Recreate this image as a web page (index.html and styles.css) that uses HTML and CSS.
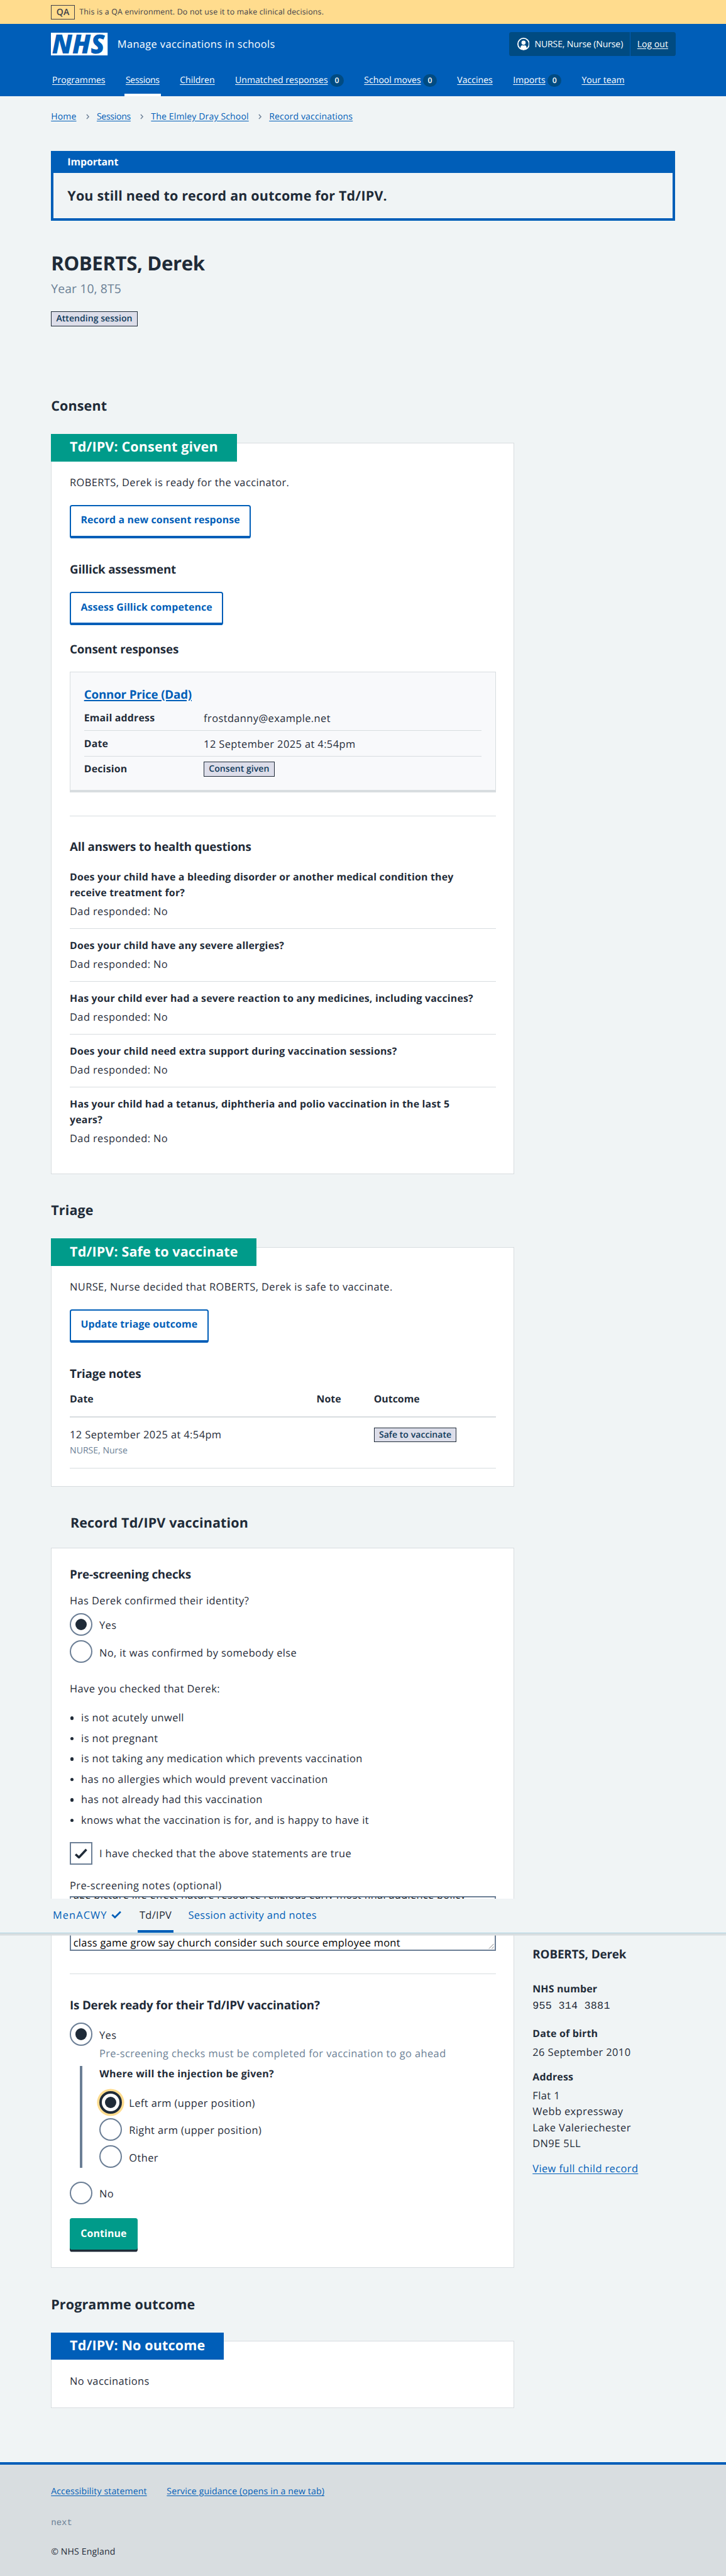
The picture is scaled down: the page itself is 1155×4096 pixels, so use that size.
FILE: index.html
```html
<!DOCTYPE html>
<html lang="en">
<head>
<meta charset="utf-8">
<title>ROBERTS, Derek – Manage vaccinations in schools</title>
<link rel="stylesheet" href="styles.css">
</head>
<body>
<div class="page">
  <div class="environment">
    <span class="environment-tag">QA</span>
    <span>This is a QA environment. Do not use it to make clinical decisions.</span>
  </div>

  <header class="header">
    <div class="header-top">
      <svg class="logo" viewBox="0 0 100 40" role="img" aria-label="NHS">
        <rect width="100" height="40" fill="#fff"/>
        <text class="logo-text" x="2" y="36.4" textLength="93" lengthAdjust="spacingAndGlyphs">NHS</text>
      </svg>
      <span class="service-name">Manage vaccinations in schools</span>
      <div class="account">
        <span class="account-user">
          <svg class="account-icon" viewBox="0 0 22 22" aria-hidden="true">
            <circle cx="11" cy="11" r="10" fill="none" stroke="#fff" stroke-width="2"/>
            <circle cx="11" cy="8.7" r="3.7" fill="#fff"/>
            <path d="M5.600 20v-2.200c0-3 1.800-4.400 3.400-4.400.7.4 1.300.5 2 .5s1.300-.1 2-.5c1.600 0 3.400 1.400 3.400 4.400V20l-5.400 1.500z" fill="#fff"/>
          </svg>
          <span>NURSE, Nurse (Nurse)</span>
        </span>
        <a class="account-link" href="#"><span>Log out</span></a>
      </div>
    </div>
    <nav class="nav">
      <a class="nav-item" href="#"><span>Programmes</span></a>
      <a class="nav-item nav-item-current" href="#"><span>Sessions</span></a>
      <a class="nav-item" href="#"><span>Children</span></a>
      <a class="nav-item" href="#"><span>Unmatched responses</span><b class="count">0</b></a>
      <a class="nav-item" href="#"><span>School moves</span><b class="count">0</b></a>
      <a class="nav-item" href="#"><span>Vaccines</span></a>
      <a class="nav-item" href="#"><span>Imports</span><b class="count">0</b></a>
      <a class="nav-item" href="#"><span>Your team</span></a>
    </nav>
  </header>

  <nav class="breadcrumb">
    <a href="#">Home</a>
    <svg class="chevron" viewBox="0 0 6 10"><path d="M1 1l3.600 4L1 9"/></svg>
    <a class="breadcrumb-sessions" href="#">Sessions</a>
    <svg class="chevron" viewBox="0 0 6 10"><path d="M1 1l3.600 4L1 9"/></svg>
    <a href="#">The Elmley Dray School</a>
    <svg class="chevron" viewBox="0 0 6 10"><path d="M1 1l3.600 4L1 9"/></svg>
    <a href="#">Record vaccinations</a>
  </nav>

  <section class="notice">
    <h2 class="notice-title">Important</h2>
    <p class="notice-text">You still need to record an outcome for Td/IPV.</p>
  </section>

  <div class="patient">
    <h1 class="patient-name">ROBERTS, Derek</h1>
    <p class="patient-year">Year 10, 8T5</p>
    <span class="tag">Attending session</span>
  </div>

  <div class="columns">
    <main class="main">
      <h2 class="heading">Consent</h2>
      <section class="card">
        <h3 class="card-heading">Td/IPV: Consent given</h3>
        <p class="text">ROBERTS, Derek is ready for the vaccinator.</p>
        <a class="button button-secondary" href="#">Record a new consent response</a>
        <h4 class="subheading">Gillick assessment</h4>
        <a class="button button-secondary" href="#">Assess Gillick competence</a>
        <h4 class="subheading subheading-responses">Consent responses</h4>
        <div class="response">
          <h5 class="response-name"><a href="#">Connor Price (Dad)</a></h5>
          <dl class="summary">
            <div class="summary-row"><dt>Email address</dt><dd>frostdanny@example.net</dd></div>
            <div class="summary-row"><dt>Date</dt><dd>12 September 2025 at 4:54pm</dd></div>
            <div class="summary-row"><dt>Decision</dt><dd><span class="tag">Consent given</span></dd></div>
          </dl>
        </div>
        <hr class="rule">
        <h4 class="subheading subheading-rule">All answers to health questions</h4>
        <dl class="answers">
          <div class="answer"><dt>Does your child have a bleeding disorder or another medical condition they receive treatment for?</dt><dd>Dad responded: No</dd></div>
          <div class="answer"><dt>Does your child have any severe allergies?</dt><dd>Dad responded: No</dd></div>
          <div class="answer"><dt>Has your child ever had a severe reaction to any medicines, including vaccines?</dt><dd>Dad responded: No</dd></div>
          <div class="answer"><dt>Does your child need extra support during vaccination sessions?</dt><dd>Dad responded: No</dd></div>
          <div class="answer"><dt>Has your child had a tetanus, diphtheria and polio vaccination in the last 5 years?</dt><dd>Dad responded: No</dd></div>
        </dl>
      </section>

      <h2 class="heading heading-next">Triage</h2>
      <section class="card card-triage">
        <h3 class="card-heading">Td/IPV: Safe to vaccinate</h3>
        <p class="text">NURSE, Nurse decided that ROBERTS, Derek is safe to vaccinate.</p>
        <a class="button button-secondary" href="#">Update triage outcome</a>
        <h4 class="subheading">Triage notes</h4>
        <table class="notes">
          <thead><tr><th class="notes-date">Date</th><th class="notes-note">Note</th><th>Outcome</th></tr></thead>
          <tbody><tr>
            <td>12 September 2025 at 4:54pm<small class="notes-author">NURSE, Nurse</small></td>
            <td></td>
            <td><span class="tag">Safe to vaccinate</span></td>
          </tr></tbody>
        </table>
      </section>

      <h2 class="heading heading-record">Record Td/IPV vaccination</h2>
      <form class="card card-form">
        <h4 class="subheading subheading-form">Pre-screening checks</h4>
        <p class="question">Has Derek confirmed their identity?</p>
        <div class="choices">
          <label class="choice"><i class="radio radio-on"></i><span class="choice-text">Yes</span></label>
          <label class="choice"><i class="radio"></i><span class="choice-text">No, it was confirmed by somebody else</span></label>
        </div>
        <p class="statement">Have you checked that Derek:</p>
        <ul class="bullets">
          <li>is not acutely unwell</li>
          <li>is not pregnant</li>
          <li>is not taking any medication which prevents vaccination</li>
          <li>has no allergies which would prevent vaccination</li>
          <li>has not already had this vaccination</li>
          <li>knows what the vaccination is for, and is happy to have it</li>
        </ul>
        <label class="choice choice-check">
          <span class="checkbox"><svg class="tick" viewBox="0 0 24 18"><path d="M2.400 10.500l6 5.500L21.600 2"/></svg></span>
          <span class="choice-text">I have checked that the above statements are true</span>
        </label>
        <p class="notes-label">Pre-screening notes (optional)</p>
        <div class="textarea">
          <p class="textarea-first">age picture life effect nature resource religious early most final audience policy</p>
          <p class="textarea-last">class game grow say church consider such source employee mont</p>
          <svg class="resizer" viewBox="0 0 10 10"><path d="M1 9.500L9.500 1M6 9.500L9.500 6"/></svg>
        </div>
        <hr class="rule">
        <h4 class="subheading subheading-rule">Is Derek ready for their Td/IPV vaccination?</h4>
        <div class="choices choices-ready">
          <div>
            <label class="choice"><i class="radio radio-on"></i><span class="choice-text">Yes</span></label>
            <p class="hint">Pre-screening checks must be completed for vaccination to go ahead</p>
            <div class="conditional">
              <p class="conditional-title">Where will the injection be given?</p>
              <div class="choices">
                <label class="choice"><i class="radio radio-on radio-focus"></i><span class="choice-text">Left arm (upper position)</span></label>
                <label class="choice"><i class="radio"></i><span class="choice-text">Right arm (upper position)</span></label>
                <label class="choice"><i class="radio"></i><span class="choice-text">Other</span></label>
              </div>
            </div>
          </div>
          <label class="choice"><i class="radio"></i><span class="choice-text">No</span></label>
        </div>
        <button class="button button-primary" type="button">Continue</button>
      </form>

      <h2 class="heading heading-next">Programme outcome</h2>
      <section class="card card-outcome">
        <h3 class="card-heading card-heading-blue">Td/IPV: No outcome</h3>
        <p class="text">No vaccinations</p>
      </section>
    </main>

    <aside class="sidebar">
      <h3 class="sidebar-name">ROBERTS, Derek</h3>
      <dl class="details">
        <dt>NHS number</dt>
        <dd class="nhs-number">955 314 3881</dd>
        <dt>Date of birth</dt>
        <dd>26 September 2010</dd>
        <dt>Address</dt>
        <dd>Flat 1<br>Webb expressway<br>Lake Valeriechester<br>DN9E 5LL</dd>
      </dl>
      <a href="#">View full child record</a>
    </aside>
  </div>

  <footer class="footer">
    <div class="footer-links">
      <a href="#">Accessibility statement</a>
      <a href="#">Service guidance (opens in a new tab)</a>
    </div>
    <p class="footer-version">next</p>
    <p class="footer-copyright">© NHS England</p>
  </footer>

  <nav class="tabs">
    <a class="tab tab-done" href="#"><span>MenACWY</span><svg class="tab-tick" viewBox="0 0 18 14"><path d="M1.500 7.200l5 4.800L16.500 2"/></svg></a>
    <a class="tab tab-current" href="#">Td/IPV</a>
    <a class="tab" href="#">Session activity and notes</a>
  </nav>
</div>
</body>
</html>
```
FILE: styles.css
```css
* { box-sizing: border-box; margin: 0; padding: 0; }

body {
  background: #f0f4f5;
  color: #1f2b38;
  font-family: "Open Sans", "Noto Sans", sans-serif;
  font-size: 18.2px;
  line-height: 28px;
  letter-spacing: 0.45px;
  text-rendering: geometricPrecision;
}

.page { position: relative; width: 1280px; zoom: 0.90234; }

a { color: #005eb8; text-decoration: underline; text-underline-offset: 2px; }
ul { list-style: none; }
i { font-style: normal; }

/* Environment banner */
.environment {
  display: flex; align-items: center; gap: 8px;
  height: 42px; padding: 1px 0 0 90px;
  background: #ffdc8e; color: #40404a;
  font-size: 13.7px; line-height: 20px; letter-spacing: 0.22px;
}
.environment-tag {
  width: 42px; height: 26px; border: 1px solid #40404a;
  font-weight: 600; font-size: 15.6px; line-height: 24px; text-align: center;
}

/* Header */
.header { height: 128px; padding: 15px 89px 0 90px; background: #005eb8; color: #fff; font-size: 15.6px; line-height: 24px; letter-spacing: 0; }
.header a { color: #fff; }
.header-top { display: flex; align-items: center; height: 42px; }
.logo { width: 100px; height: 40px; overflow: visible; }
.logo-text { fill: #005eb8; font: italic 800 46.500px "Open Sans", sans-serif; letter-spacing: 0; }
.service-name { margin: -1px 0 0 17px; font-size: 18.2px; line-height: 28px; letter-spacing: 0.42px; }
.account { display: flex; height: 42px; margin-left: auto; border-radius: 4px; background: #004b82; letter-spacing: 0; }
.account-user { display: flex; align-items: center; gap: 9px; padding: 0 12px 0 14px; border-right: 1px solid #005eb8; }
.account-user span { letter-spacing: -0.15px; }
.account-icon { width: 22px; height: 22px; }
.account-link { display: flex; align-items: center; padding: 0 13px 0 12px; }
.nav { display: flex; gap: 32px; height: 56px; margin-top: 15px; }
.nav-item { display: flex; align-items: center; gap: 4px; padding: 0 2px; text-decoration: none; border-top: 4.440px solid transparent; border-bottom: 4.440px solid transparent; }
.nav-item span { text-decoration: underline; text-underline-offset: 2px; }
.nav-item-current { border-bottom-color: #fff; letter-spacing: -0.36px; }
.count { width: 24px; height: 22px; border-radius: 11px; background: #004b82; font-size: 13.500px; line-height: 22px; font-weight: 600; text-align: center; }

/* Breadcrumb */
.breadcrumb { display: flex; align-items: center; padding: 24px 90px 0; font-size: 15.6px; line-height: 24px; letter-spacing: 0.15px; }
.breadcrumb-sessions { letter-spacing: -0.34px; }
.chevron { width: 6px; height: 10px; margin: 0 13px 0 17px; fill: none; stroke: #6c7f96; stroke-width: 1.600; }

/* Important notice */
.notice { margin: 48px 90px 0; border: 4.440px solid #005eb8; border-top: 0; }
.notice-title { height: 39px; padding: 6px 24.500px 0; background: #005eb8; color: #fff; font-size: 17.6px; line-height: 28px; letter-spacing: -0.1px; }
.notice-text { padding: 25px 24.500px 23px; font-size: 23.800px; line-height: 32px; font-weight: 700; letter-spacing: 0.21px; }

/* Patient summary */
.patient { padding: 55px 90px 0; }
.patient-name { font-size: 34.500px; line-height: 40px; letter-spacing: -0.4px; }
.patient-year { margin-top: 8.700px; color: #6c8196; font-size: 21.500px; line-height: 32px; letter-spacing: 0.12px; }
.patient .tag { margin-top: 24px; }

.tag {
  display: block; width: fit-content; height: 26px; padding: 0 8px;
  border: 1px solid #1f2b38; background: #dcdde9; color: #103a5a;
  font-size: 15.6px; line-height: 24px; font-weight: 600; letter-spacing: 0.03px;
}

/* Page columns */
.columns { display: grid; grid-template-columns: 817px 252px; gap: 32px; padding: 125.400px 0 0 90px; }

.heading { font-size: 23.800px; line-height: 32px; letter-spacing: 0.17px; }
.heading-next { margin-top: 49px; }
.heading-record { margin: 48px 0 -20px 34px; }

.card { margin-top: 47.400px; padding: 0 32px 48px; border: 1px solid #d8dde0; background: #fff; }
.card-heading {
  width: fit-content; margin: -16px 0 23px -33px; padding: 8px 33px;
  background: #009b8a; color: #fff; font-size: 23.800px; line-height: 32px; letter-spacing: 0.18px;
}
.card-heading-blue { background: #005eb8; }
.card-triage { padding-bottom: 32px; }
.card-form { padding: 32px 32px 27.200px; }
.card-outcome { padding-bottom: 33px; }

.subheading { margin-top: 41px; font-size: 20.800px; line-height: 28px; letter-spacing: -0.2px; }
.subheading-responses { margin-top: 28.700px; }
.subheading-rule { margin-top: 40.500px; }
.subheading-form { margin-top: 0; }

/* Buttons */
.button {
  display: block; width: fit-content; border-radius: 4px;
  font: 700 17.600px/28px "Open Sans", "Noto Sans", sans-serif; letter-spacing: 0.14px; text-decoration: none;
}
.button-secondary { margin-top: 25.600px; padding: 10.500px 17px 13.900px; border: 2.220px solid #005eb8; border-bottom-width: 4.440px; background: #fff; }
.button-primary { margin: 24px 0 4px; padding: 14px 19px; border: 0; background: #009b8a; color: #fff; box-shadow: 0 4px 0 #1f2b38; }

/* Consent response */
.response { margin-top: 25px; padding: 25px 24px 15px; border: 1px solid #d8dde0; border-bottom-width: 4.440px; background: #f8f9fb; }
.response-name { font-size: 20.800px; line-height: 28px; letter-spacing: -0.2px; }
.response-name a { text-decoration-thickness: 2px; }
.summary { margin-top: 5.300px; }
.summary-row { display: grid; grid-template-columns: 211px 1fr; height: 45px; padding-top: 8px; border-bottom: 1px solid #d8dde0; }
.summary-row:last-child { border-bottom: 0; height: 44px; }
.summary .tag { margin-top: 1px; }
dt, th, .conditional-title { font-size: 17.600px; font-weight: 700; letter-spacing: 0.22px; }
.rule { margin-top: 40.500px; border: 0; border-top: 1px solid #d8dde0; }

.answers { margin-top: 9px; }
.answer { padding: 16px 0; border-bottom: 1px solid #d8dde0; }
.answer:last-child { padding-bottom: 0; border-bottom: 0; }
.answer dt { padding-right: 31px; }
.answer:first-child dt, .answer:last-child dt { padding-right: 65px; }
.answer dd { margin-top: 4px; }

/* Triage notes */
.notes { width: 751px; margin-top: 16px; border-collapse: collapse; table-layout: fixed; text-align: left; }
.notes-date { width: 435px; }
.notes-note { width: 101px; }
.notes th { padding-bottom: 17px; border-bottom: 2.220px solid #d8dde0; letter-spacing: 0; }
.notes td { padding: 15px 0 18px; border-bottom: 1.110px solid #d8dde0; vertical-align: top; }
.notes-author { display: block; margin-top: 3px; color: #6c8196; font-size: 15.600px; line-height: 24px; letter-spacing: 0; }
.notes .tag { margin-top: 2px; }

/* Form */
.question { margin-top: 16.900px; }
.choices { display: grid; gap: 8px; margin-top: 9px; }
.choice { display: flex; gap: 12px; height: 40px; }
.choice-text { padding-top: 7px; }
.radio { display: flex; align-items: center; justify-content: center; width: 40px; height: 40px; border: 2.220px solid #6c7f96; border-radius: 50%; background: #fff; }
.radio-on::before { content: ""; width: 20px; height: 20px; border-radius: 50%; background: #1f2b38; }
.radio-focus { border: 4.440px solid #1f2b38; box-shadow: 0 0 0 4px #ffdc8e; }
.statement { margin-top: 31px; }
.bullets { display: grid; gap: 8px; margin: 23px 0 25px; }
.bullets li { display: flex; align-items: center; gap: 13px; }
.bullets li::before { content: ""; width: 6px; height: 6px; margin: 2px 0 0 1px; border-radius: 50%; background: #1f2b38; }
.choice-check .choice-text { padding-top: 6px; letter-spacing: 0.4px; }
.checkbox { display: flex; align-items: center; justify-content: center; width: 40px; height: 40px; border: 2.220px solid #6c7f96; }
.tick { width: 24px; height: 18px; fill: none; stroke: #1f2b38; stroke-width: 4; }
.notes-label { margin-top: 23px; }
.textarea { position: relative; display: flex; flex-direction: column; justify-content: flex-end; height: 96px; margin-top: 5px; padding: 0 4px; border: 2.220px solid #6c7f96; overflow: hidden; color: #000; letter-spacing: 0.32px; white-space: nowrap; }
.textarea-first { margin-bottom: 56px; }
.textarea-last { margin-bottom: -1.600px; }
.resizer { position: absolute; right: 1px; bottom: 1px; width: 10px; height: 10px; fill: none; stroke: #777; stroke-width: 1; }
.choices-ready { gap: 24px; margin-top: 17px; }
.hint { margin: -1px 0 0 52px; color: #6c8196; }
.conditional { margin: 9px 0 0 18px; padding-left: 30px; border-left: 4.440px solid #6c7f96; }
.conditional .choices { margin-top: 16px; }
.conditional-title { letter-spacing: 0.36px; }

/* Sidebar */
.sidebar { padding-top: 2730px; }
.sidebar-name { font-size: 20.800px; line-height: 28px; letter-spacing: -0.1px; }
.details { margin: 32px 0 16px; }
.details dt { margin-top: 17px; }
.details dt:first-child { margin-top: 0; }
.details dd { margin-top: 4px; }
.details .nhs-number { padding-bottom: 2px; font-family: "Liberation Mono", monospace; font-size: 18.500px; letter-spacing: 0.3px; }

/* Footer */
.footer { height: 201px; margin-top: 96px; padding: 35px 90px 0; border-top: 4.440px solid #005eb8; background: #d8dde0; font-size: 15.600px; line-height: 24px; letter-spacing: 0.16px; }
.footer-links { display: flex; gap: 35px; }
.footer-version { margin-top: 32px; color: #6c8196; font-family: "Liberation Mono", monospace; letter-spacing: 0; }
.footer-copyright { margin-top: 26px; }

/* Programme tabs, pinned over the form */
.tabs { position: absolute; top: 3346px; left: 0; display: flex; gap: 23px; width: 100%; height: 61px; padding: 0 90px; border-bottom: 1.110px solid #aed5e4; background: #f0f4f5; box-shadow: 0 4px 0 #d8dde0; letter-spacing: 0.36px; }
.tab { display: flex; align-items: center; gap: 8px; padding: 0 3px; border-top: 2px solid transparent; border-bottom: 4.440px solid transparent; text-decoration: none; }
.tab-done { gap: 7px; padding-right: 6px; letter-spacing: 1.200px; }
.tab-current { border-bottom-color: #005eb8; color: #1f2b38; }
.tab-tick { width: 18px; height: 14px; fill: none; stroke: #005eb8; stroke-width: 3; }
```
